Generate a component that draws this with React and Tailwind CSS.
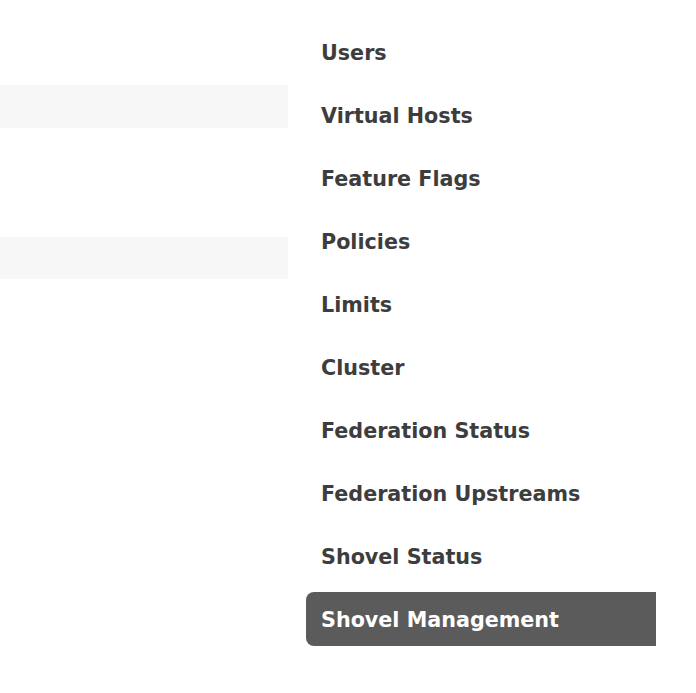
export default function App() {
  const items = [
    "Users",
    "Virtual Hosts",
    "Feature Flags",
    "Policies",
    "Limits",
    "Cluster",
    "Federation Status",
    "Federation Upstreams",
    "Shovel Status",
    "Shovel Management",
  ];
  return (
    <div className="flex w-[696px] h-[693px] bg-white overflow-hidden" style={{ fontFamily: '"DejaVu Sans", Verdana, sans-serif' }}>
      <div className="w-[288px] shrink-0 flex flex-col">
        <div className="mt-[85px] h-[43px] bg-[#f7f7f7]" />
        <div className="mt-[109px] h-[42px] bg-[#f7f7f7]" />
      </div>
      <ul className="ml-[18px] w-[350px] flex flex-col gap-[9px] pt-[25px]">
        {items.map((t, i) => {
          const active = i === items.length - 1;
          return (
            <li
              key={t}
              className={
                "h-[54px] flex items-center px-[15px] pt-[4px] text-[20.7px] font-bold " +
                (active ? "bg-[#5b5b5b] text-white rounded-l-[8px]" : "text-[#3d3d3d]")
              }
            >
              {t}
            </li>
          );
        })}
      </ul>
    </div>
  );
}
